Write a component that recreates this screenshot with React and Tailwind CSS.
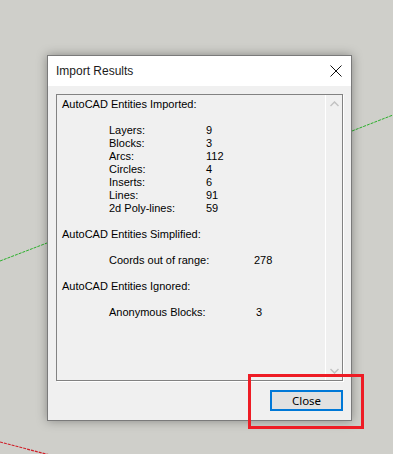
import React from "react";

const sans = { fontFamily: '"Liberation Sans", Arial, sans-serif' };
const noto = { fontFamily: '"Noto Sans", "Open Sans", sans-serif' };

function Line({ children }) {
  return <div className="h-[13px] leading-[13px] whitespace-nowrap">{children}</div>;
}

function Item({ label, value, w = "w-[97px]" }) {
  return (
    <Line>
      <div className="flex pl-[47px]">
        <span className={w}>{label}</span>
        <span>{value}</span>
      </div>
    </Line>
  );
}

export default function App() {
  return (
    <div className="relative w-[393px] h-[454px] overflow-hidden bg-[#cfcfca]" style={sans}>
      <svg className="absolute inset-0" width="393" height="454">
        <line x1="0" y1="261" x2="47" y2="243" stroke="#2bb02b" strokeWidth="1" strokeDasharray="3 1" />
        <line x1="352" y1="131" x2="393" y2="115" stroke="#2bb02b" strokeWidth="1" strokeDasharray="3 1" />
        <line x1="0" y1="442" x2="50" y2="455" stroke="#d0202a" strokeWidth="1.2" strokeDasharray="3 1" />
      </svg>
      <div className="relative pt-[55px] pl-[47px]">
        <div className="w-[305px] h-[366px] border border-[#7a7a7a] bg-[#f0f0f0] shadow-[0_0_10px_rgba(0,0,0,0.35)] flex flex-col">
          <div className="h-[30px] bg-white flex items-center justify-between pl-[8px] pr-[9px]">
            <span className="text-[12px] leading-[14px] text-[#1a1a1a]">Import Results</span>
            <svg width="12" height="12" viewBox="0 0 12 12">
              <path d="M0.5 0.5 L11.5 11.5 M11.5 0.5 L0.5 11.5" stroke="#111" strokeWidth="1" />
            </svg>
          </div>
          <div className="px-[8px] pt-[8px]">
            <div className="h-[287px] border border-[#828282] shadow-[1px_1px_0_#fff] flex">
              <div className="flex-1 pl-[5px] pt-[3px] text-[11px] text-black">
                <Line>AutoCAD Entities Imported:</Line>
                <Line />
                <Item label="Layers:" value="9" />
                <Item label="Blocks:" value="3" />
                <Item label="Arcs:" value="112" />
                <Item label="Circles:" value="4" />
                <Item label="Inserts:" value="6" />
                <Item label="Lines:" value="91" />
                <Item label="2d Poly-lines:" value="59" />
                <Line />
                <Line>AutoCAD Entities Simplified:</Line>
                <Line />
                <Item label="Coords out of range:" value="278" w="w-[145px]" />
                <Line />
                <Line>AutoCAD Entities Ignored:</Line>
                <Line />
                <Item label="Anonymous Blocks:" value="3" w="w-[147px]" />
              </div>
              <div className="w-[17px] border-l border-white flex flex-col justify-between items-center py-[6px]">
                <svg width="9" height="6" viewBox="0 0 9 6">
                  <path d="M0.5 5 L4.5 1 L8.5 5" stroke="#c2c2c2" strokeWidth="1.5" fill="none" />
                </svg>
                <svg width="9" height="6" viewBox="0 0 9 6">
                  <path d="M0.5 1 L4.5 5 L8.5 1" stroke="#c2c2c2" strokeWidth="1.5" fill="none" />
                </svg>
              </div>
            </div>
          </div>
          <div className="flex justify-end px-[8px] pt-[9px]">
            <div className="w-[73px] h-[21px] border-2 border-[#0078d7] bg-[#e1e1e1] flex items-center justify-center text-[11.5px] text-black" style={noto}>
              Close
            </div>
          </div>
        </div>
      </div>
      <div className="absolute left-[248px] top-[374px] w-[116px] h-[55px] border-[3px] border-[#ee1c25]" />
    </div>
  );
}
